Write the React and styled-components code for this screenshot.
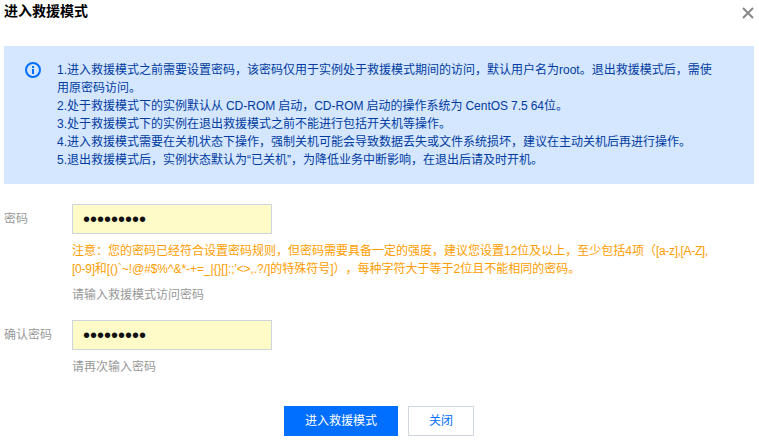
import React, { useState } from "react";
import styled, { createGlobalStyle } from "styled-components";

const GlobalStyle = createGlobalStyle`
  * {
    box-sizing: border-box;
  }
  body {
    margin: 0;
    background: #fff;
    color: #000;
    font-family: "Liberation Sans", "Noto Sans CJK SC", sans-serif;
    font-size: 12px;
    line-height: 18px;
    text-spacing-trim: space-all;
  }
`;

const Dialog = styled.div`
  width: 759px;
  height: 440px;
  padding: 0 5px 4px 4px;
  display: flex;
  flex-direction: column;
  overflow: hidden;
`;

const Header = styled.div`
  height: 46px;
  display: flex;
  justify-content: space-between;
  align-items: flex-start;
`;

const Title = styled.h3`
  margin: 0;
  padding-top: 1px;
  font-size: 14px;
  line-height: 20px;
  font-weight: 700;
`;

const CloseButton = styled.button`
  margin: 7px 0 0;
  padding: 0;
  border: 0;
  background: none;
  line-height: 0;
  cursor: pointer;
`;

const Notice = styled.div`
  height: 138px;
  padding: 15px 20px 15px 21px;
  background: #d5e7ff;
  color: #003b9f;
  display: flex;
`;

const NoticeIcon = styled.svg`
  flex: none;
  margin: 1px 16px 0 0;
`;

const NoticeLine = styled.div`
  white-space: nowrap;
  word-spacing: -0.4px;
`;

const Form = styled.form`
  padding-top: 20px;
  flex: 1;
  display: flex;
  flex-direction: column;
`;

const Field = styled.div`
  display: flex;
  margin-bottom: ${(props) => props.$gap || 0}px;
`;

const Label = styled.label`
  width: 68px;
  flex: none;
  line-height: 30px;
  color: #999;
`;

const Input = styled.input`
  display: block;
  width: 200px;
  height: 30px;
  margin: 0;
  padding: 0 10px;
  border: 1px solid #cfd5de;
  border-radius: 0;
  background: #fffbc8;
  color: #111;
  font-family: "Liberation Sans", sans-serif;
  font-size: 20px;
  outline: none;
`;

const Warning = styled.div`
  margin-top: 8px;
  color: #ff9d00;
  white-space: nowrap;
`;

const Chars = styled.span`
  letter-spacing: ${(props) => props.$tight}px;
`;

const Hint = styled.div`
  margin-top: 8px;
  color: #999;
`;

const Footer = styled.div`
  margin-top: auto;
  display: flex;
  justify-content: center;
  gap: 10px;
`;

const Button = styled.button`
  height: 30px;
  margin: 0;
  padding: 0 20px;
  border: 1px solid ${(props) => (props.$primary ? "#006eff" : "#cfd5de")};
  background: ${(props) => (props.$primary ? "#006eff" : "#fff")};
  color: ${(props) => (props.$primary ? "#fff" : "#006eff")};
  font: inherit;
  cursor: pointer;
`;

const notices = [
  "1.进入救援模式之前需要设置密码，该密码仅用于实例处于救援模式期间的访问，默认用户名为root。退出救援模式后，需使",
  "用原密码访问。",
  "2.处于救援模式下的实例默认从 CD-ROM 启动，CD-ROM 启动的操作系统为 CentOS 7.5 64位。",
  "3.处于救援模式下的实例在退出救援模式之前不能进行包括开关机等操作。",
  "4.进入救援模式需要在关机状态下操作，强制关机可能会导致数据丢失或文件系统损坏，建议在主动关机后再进行操作。",
  "5.退出救援模式后，实例状态默认为“已关机”，为降低业务中断影响，在退出后请及时开机。",
];

export default function App() {
  const [password, setPassword] = useState("Rescue123");
  const [confirm, setConfirm] = useState("Rescue123");

  return (
    <Dialog lang="zh-CN">
      <GlobalStyle />
      <Header>
        <Title>进入救援模式</Title>
        <CloseButton aria-label="关闭">
          <svg width="12" height="12" viewBox="0 0 12 12">
            <path d="M1 1L11 11M11 1L1 11" stroke="#888" strokeWidth="2" />
          </svg>
        </CloseButton>
      </Header>

      <Notice>
        <NoticeIcon width="16" height="16" viewBox="0 0 16 16">
          <circle
            cx="8"
            cy="8"
            r="7"
            fill="none"
            stroke="#006eff"
            strokeWidth="2"
          />
          <path d="M7 4h2v2H7zM7 7h2v5H7z" fill="#006eff" />
        </NoticeIcon>
        <div>
          {notices.map((line, index) => (
            <NoticeLine key={index}>{line}</NoticeLine>
          ))}
        </div>
      </Notice>

      <Form onSubmit={(e) => e.preventDefault()}>
        <Field $gap={16}>
          <Label htmlFor="password">密码</Label>
          <div>
            <Input
              id="password"
              type="password"
              value={password}
              onChange={(e) => setPassword(e.target.value)}
            />
            <Warning>
              <div>
                注意：您的密码已经符合设置密码规则，但密码需要具备一定的强度，建议您设置12位及以上，至少包括4项（
                <Chars $tight={-0.35}>[a-z],[A-Z],</Chars>
              </div>
              <div>
                <Chars $tight={-0.25}>[0-9]</Chars>和
                <Chars $tight={-0.07}>
                  {"[()`~!@#$%^&*-+=_|{}[]:;'<>,.?/]"}
                </Chars>
                的特殊符号]），每种字符大于等于2位且不能相同的密码。
              </div>
            </Warning>
            <Hint>请输入救援模式访问密码</Hint>
          </div>
        </Field>
        <Field>
          <Label htmlFor="confirm">确认密码</Label>
          <div>
            <Input
              id="confirm"
              type="password"
              value={confirm}
              onChange={(e) => setConfirm(e.target.value)}
            />
            <Hint>请再次输入密码</Hint>
          </div>
        </Field>
        <Footer>
          <Button type="submit" $primary>
            进入救援模式
          </Button>
          <Button type="button">关闭</Button>
        </Footer>
      </Form>
    </Dialog>
  );
}
